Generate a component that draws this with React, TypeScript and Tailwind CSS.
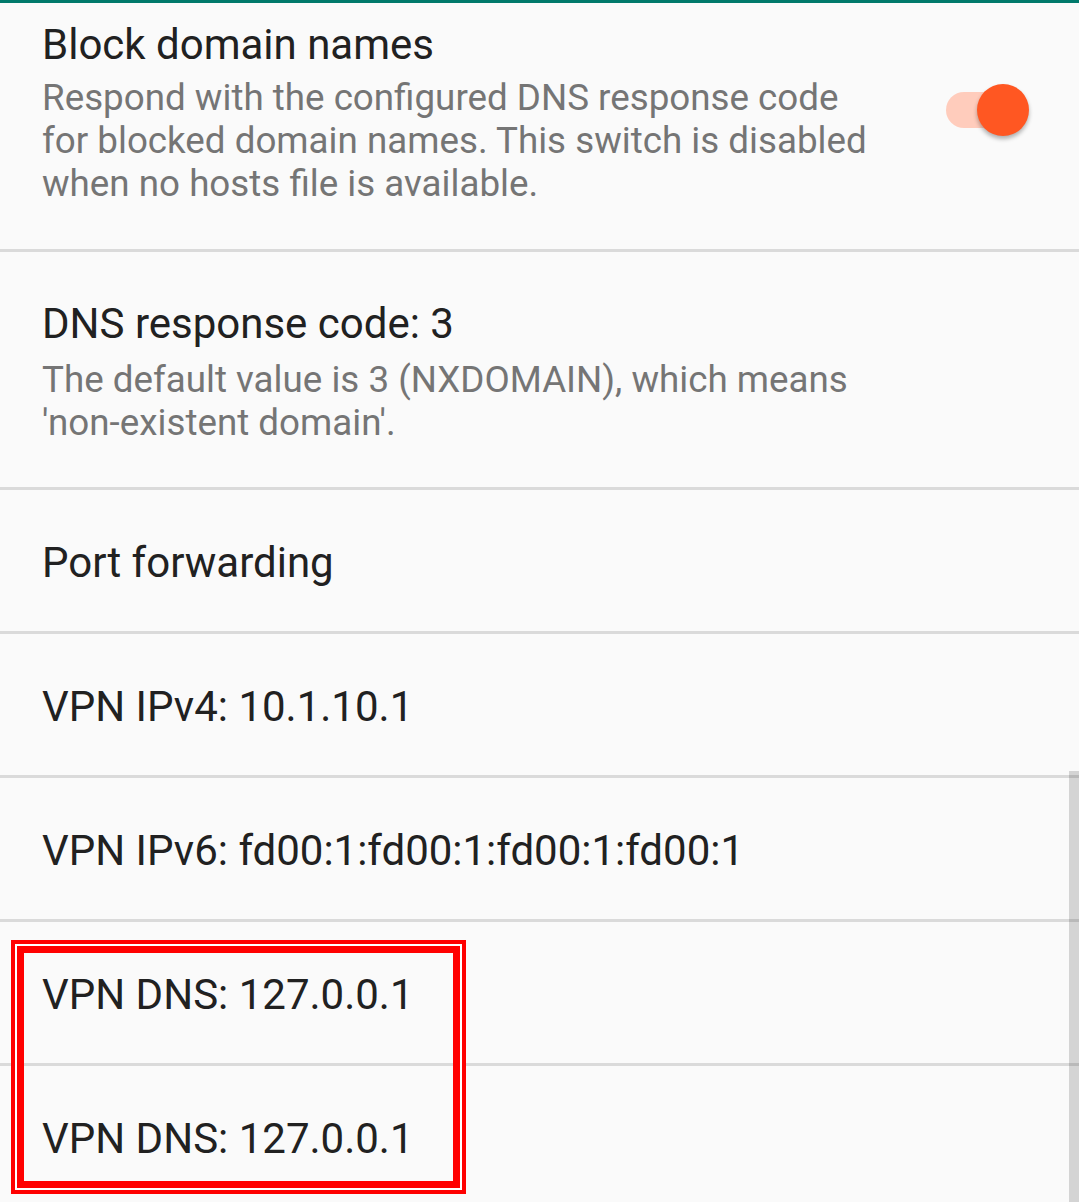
import React from "react";

const titleCls = "text-[42px] leading-[50px] text-[#212121]";
const summaryCls = "text-[36.75px] leading-[43px] text-[#757575]";

function SimpleRow({ title }: { title: string }) {
  return (
    <div className="border-b-[3px] border-[#dadada] pl-[42px] pt-[48px] pb-[43px]">
      <div className={titleCls}>{title}</div>
    </div>
  );
}

export default function App() {
  return (
    <div
      className="relative w-[1079px] h-[1202px] overflow-hidden bg-[#fafafa]"
      style={{ fontFamily: "Roboto, 'Noto Sans', sans-serif" }}
    >
      <div className="h-[3px] bg-[#00796b]" />
      <div className="flex flex-col">
        {/* Row 1 */}
        <div className="flex items-start border-b-[3px] border-[#dadada] pl-[42px] pt-[17px] pb-[44px]">
          <div className="w-[843px]">
            <div className={titleCls}>Block domain names</div>
            <div className={`${summaryCls} mt-[6px]`}>
              Respond with the configured DNS response code for blocked domain names. This switch is disabled when no hosts file is available.
            </div>
          </div>
          <div className="relative ml-auto mr-[50px] mt-[64px] w-[83px] h-[53px] shrink-0">
            <div className="absolute left-0 top-[8px] w-[74px] h-[36px] rounded-full bg-[#ffccbc]" />
            <div className="absolute left-[31px] top-0 w-[52px] h-[52px] rounded-full bg-[#ff5722] shadow-[0_3px_4px_rgba(0,0,0,0.3)]" />
          </div>
        </div>
        {/* Row 2 */}
        <div className="border-b-[3px] border-[#dadada] pl-[42px] pt-[47px] pb-[43px]">
          <div className={titleCls}>DNS response code: 3</div>
          <div className={`${summaryCls} mt-[9px] w-[830px]`}>
            The default value is 3 (NXDOMAIN), which means 'non-existent domain'.
          </div>
        </div>
        <SimpleRow title="Port forwarding" />
        <SimpleRow title="VPN IPv4: 10.1.10.1" />
        <SimpleRow title="VPN IPv6: fd00:1:fd00:1:fd00:1:fd00:1" />
        <SimpleRow title="VPN DNS: 127.0.0.1" />
        <SimpleRow title="VPN DNS: 127.0.0.1" />
      </div>

      {/* scrollbar */}
      <div className="absolute right-0 top-[771px] w-[10px] h-[431px] bg-black/15" />

      {/* red annotation */}
      <div className="absolute left-[11px] top-[940px] w-[455px] h-[254px] border-4 border-[#ff0000]">
        <div className="h-full w-full border-2 border-white">
          <div className="h-full w-full border-[7px] border-[#ff0000]" />
        </div>
      </div>
    </div>
  );
}
